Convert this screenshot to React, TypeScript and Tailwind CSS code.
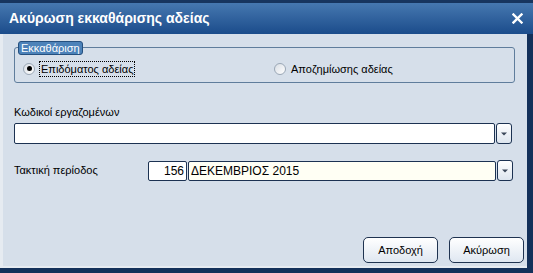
import React from "react";

const font = { fontFamily: '"Liberation Sans", Arial, sans-serif' };

function Radio({ checked }: { checked?: boolean }) {
  return (
    <span className="flex h-[12px] w-[12px] items-center justify-center rounded-full border border-[#9aa7b6] bg-gradient-to-br from-[#d9dee5] to-white">
      {checked && <span className="h-[5px] w-[5px] rounded-full bg-black" />}
    </span>
  );
}

function DropButton() {
  return (
    <div className="ml-[1px] flex h-[21px] w-[16px] items-center justify-center rounded-[3px] border border-[#1c3252] bg-gradient-to-b from-white to-[#dde5ee]">
      <svg width="6" height="4" viewBox="0 0 6 4">
        <path d="M0 0.5 L6 0.5 L3 3.5 Z" fill="#3a4658" />
      </svg>
    </div>
  );
}

function DialogButton({ label }: { label: string }) {
  return (
    <button className="flex h-[26px] w-[75px] items-center justify-center rounded-[5px] border border-[#1f3350] bg-gradient-to-b from-white to-[#dfe7f1] text-[11px] text-black">
      {label}
    </button>
  );
}

export default function App() {
  return (
    <div className="flex h-[273px] w-[533px] flex-col bg-[#13305a]" style={font}>
      {/* title bar */}
      <div className="h-[3px] bg-[#17355f]" />
      <div className="flex h-[31px] items-center justify-between bg-gradient-to-b from-[#4678b0] to-[#1b4c8b] pl-[9px] pr-[10px]">
        <span className="text-[14px] font-bold text-white">Ακύρωση εκκαθάρισης αδείας</span>
        <svg width="11" height="11" viewBox="0 0 11 11">
          <path d="M1.5 1.5 L9.5 9.5 M9.5 1.5 L1.5 9.5" stroke="white" strokeWidth="2.4" strokeLinecap="square" />
        </svg>
      </div>

      {/* body */}
      <div className="mr-[6px] mb-[5px] flex flex-1 flex-col border-l-[3px] border-b-[2px] border-[#e6ebf1] bg-[#d6dfea] pl-[11px] pr-[3px] text-[11px] text-black">
        <div className="relative mt-[13px] mr-[9px] flex h-[36px] items-center rounded-[3px] border border-[#5f7d9c] pl-[8px]">
          <span className="absolute -top-[7px] left-[3px] rounded-[3px] border border-[#25507f] bg-[#4c82b9] px-[2px] text-[11px] leading-[12px] text-white">
            Εκκαθάριση
          </span>
          <div className="mt-[7px] flex w-[251px] items-center gap-[4px]">
            <Radio checked />
            <span className="border border-dotted border-black px-[1px] leading-[14px]">Επιδόματος αδείας</span>
          </div>
          <div className="mt-[7px] flex items-center gap-[5px]">
            <Radio />
            <span className="leading-[14px]">Αποζημίωσης αδείας</span>
          </div>
        </div>

        <div className="mt-[23px] leading-[13px]">Κωδικοί εργαζομένων</div>
        <div className="mt-[4px] mr-[12px] flex items-center">
          <div className="h-[21px] flex-1 rounded-[2px] border border-[#1c3252] bg-white" />
          <DropButton />
        </div>

        <div className="mt-[16px] mr-[11px] flex items-center">
          <span className="w-[134px]">Τακτική περίοδος</span>
          <div className="flex h-[20px] w-[39px] items-center justify-end rounded-[2px] border border-[#1c3252] bg-white pr-[2px] text-[12px]">
            156
          </div>
          <div className="ml-[1px] flex h-[20px] flex-1 items-center rounded-[2px] border border-[#1c3252] bg-[#fffff4] pl-[2px] text-[12px]">
            ΔΕΚΕΜΒΡΙΟΣ 2015
          </div>
          <DropButton />
        </div>

        <div className="mt-auto mb-[3px] flex justify-end gap-[11px]">
          <DialogButton label="Αποδοχή" />
          <DialogButton label="Ακύρωση" />
        </div>
      </div>
    </div>
  );
}
